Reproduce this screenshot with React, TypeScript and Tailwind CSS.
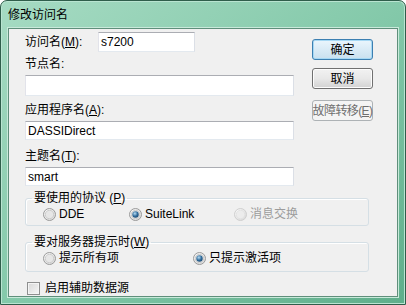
import type { ReactNode } from 'react'

const font = { fontFamily: '"Liberation Sans", "Noto Sans CJK SC", sans-serif' }

function TextBox({ value, className }: { value?: string; className: string }) {
  return (
    <div className={`flex items-center border border-[#abadb3] border-r-[#dbdfe6] border-b-[#e3e9ef] border-l-[#e2e3ea] bg-white pl-[2px] text-[12px] ${className}`}>
      {value}
    </div>
  )
}

function Radio({ checked, disabled }: { checked?: boolean; disabled?: boolean }) {
  return (
    <svg width="13" height="13" viewBox="0 0 13 13" className="shrink-0">
      <defs>
        <radialGradient id="rin" cx="0.35" cy="0.35" r="0.8">
          <stop offset="0" stopColor="#ffffff" />
          <stop offset="1" stopColor="#d6d6d6" />
        </radialGradient>
        <radialGradient id="rdot" cx="0.4" cy="0.35" r="0.7">
          <stop offset="0" stopColor="#b6dcf4" />
          <stop offset="0.6" stopColor="#2f6a9a" />
          <stop offset="1" stopColor="#1c4a73" />
        </radialGradient>
      </defs>
      <circle cx="6.5" cy="6.5" r="6" fill="url(#rin)" stroke={disabled ? '#cfcfcf' : '#9a9a9a'} strokeWidth="1" />
      <circle cx="6.5" cy="6.5" r="4.2" fill={disabled ? '#ececec' : '#e6e6e6'} stroke={disabled ? '#e0e0e0' : '#c4c4c4'} strokeWidth="0.8" />
      {checked && <circle cx="6.5" cy="6.5" r="3.2" fill="url(#rdot)" />}
    </svg>
  )
}

function RadioItem({ label, checked, disabled, className }: { label: string; checked?: boolean; disabled?: boolean; className?: string }) {
  return (
    <div className={`flex items-center gap-[3px] text-[12px] ${disabled ? 'text-[#9c9c9c]' : 'text-black'} ${className ?? ''}`}>
      <Radio checked={checked} disabled={disabled} />
      <span className="leading-none">{label}</span>
    </div>
  )
}

function Group({ title, children, className }: { title: ReactNode; children: ReactNode; className: string }) {
  return (
    <fieldset className={`w-[344px] rounded-[3px] border border-[#d5dfe5] shadow-[inset_1px_1px_0_#ffffff] ${className}`}>
      <legend className="ml-[6px] px-[2px] text-[12px] leading-[14px]">{title}</legend>
      {children}
    </fieldset>
  )
}

function Button({ label, primary, disabled }: { label: ReactNode; primary?: boolean; disabled?: boolean }) {
  const cls = disabled
    ? 'border-[#adb2b5] bg-[#f4f4f4] text-[#6f6f6f]'
    : primary
      ? 'border-[#3c7fb1] bg-gradient-to-b from-[#eaf6fd] to-[#c9e0ef] shadow-[inset_0_0_0_1px_#a6d8f4] text-black'
      : 'border-[#707070] bg-gradient-to-b from-[#f2f2f2] via-[#e8e8e8] to-[#d2d2d2] shadow-[inset_0_0_0_1px_#fcfcfc] text-black'
  return (
    <div className={`flex h-[21px] w-[61px] items-center justify-center whitespace-nowrap rounded-[3px] border text-[12px] ${cls}`}>
      {label}
    </div>
  )
}

export default function App() {
  return (
    <div style={font} className="relative h-[305px] w-[406px] overflow-hidden bg-white">
      <div className="flex h-[305px] w-[406px] flex-col rounded-t-[7px] border border-[#2f5e4b] bg-gradient-to-br from-[#a6dbc3] via-[#84c9aa] to-[#5fae8b] shadow-[inset_0_0_0_1px_#b9e4d1]">
        <div className="flex h-[27px] shrink-0 items-center pl-[7px] text-[12px] text-black">修改访问名</div>
        <div className="mx-[7px] h-[269px] border border-[#5f8f7b] bg-[#f0f0f0] pl-[16px] pt-[3px] text-black shadow-[0_0_0_1px_#c8e9da]">
          <div className="flex">
            <div className="flex w-[269px] flex-col text-[12px]">
              <div className="flex h-[20px] items-center">
                <span className="w-[73px]">访问名(<span className="underline">M</span>):</span>
                <TextBox value="s7200" className="h-[20px] w-[97px]" />
              </div>
              <div className="flex h-[23px] items-center">节点名:</div>
              <TextBox className="h-[21px] w-[269px]" />
              <div className="flex h-[25px] items-center pt-[3px]">应用程序名(<span className="underline">A</span>):</div>
              <TextBox value="DASSIDirect" className="h-[19px] w-[269px]" />
              <div className="flex h-[27px] items-center pt-[5px]">主题名(<span className="underline">T</span>):</div>
              <TextBox value="smart" className="h-[19px] w-[269px]" />
            </div>
            <div className="ml-[18px] flex flex-col pt-[7px]">
              <Button label="确定" primary />
              <div className="mt-[8px]"><Button label="取消" /></div>
              <div className="mt-[11px]">
                <Button disabled label={<span className="text-[12px] tracking-[-0.6px]">故障转移(<span className="underline">E</span>)</span>} />
              </div>
            </div>
          </div>
          <Group title={<>要使用的协议 (<span className="underline">P</span>)</>} className="mt-[5px] pb-[2px]">
            <div className="flex h-[18px] items-center pl-[17px]">
              <RadioItem label="DDE" className="w-[86px]" />
              <RadioItem label="SuiteLink" checked className="w-[105px]" />
              <RadioItem label="消息交换" disabled />
            </div>
          </Group>
          <Group title={<>要对服务器提示时(<span className="underline">W</span>)</>} className="mt-[9px] pb-[4px]">
            <div className="flex h-[18px] items-center pl-[17px]">
              <RadioItem label="提示所有项" className="w-[150px]" />
              <RadioItem label="只提示激活项" checked />
            </div>
          </Group>
          <div className="mt-[9px] flex h-[14px] items-center gap-[5px] pl-[2px] text-[12px]">
            <div className="h-[13px] w-[13px] border border-[#8e8f8f] bg-gradient-to-br from-[#d8d8d8] to-[#f6f6f6] shadow-[inset_0_0_0_1px_#f4f4f4]" />
            <span>启用辅助数据源</span>
          </div>
        </div>
      </div>
    </div>
  )
}
